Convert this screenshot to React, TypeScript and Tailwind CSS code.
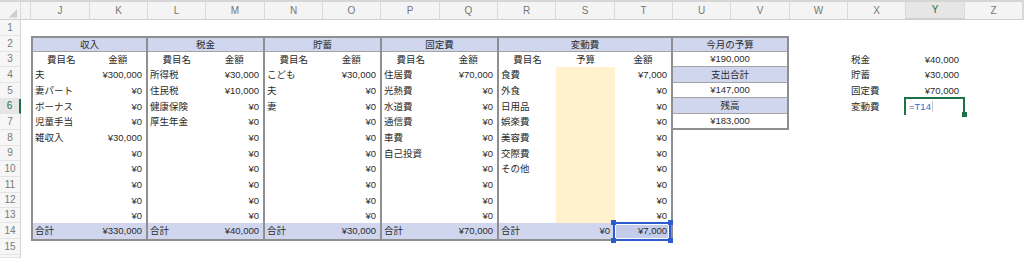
import React from 'react';

const BLUE = 'bg-[#cfd6ee]';

const letters = ['', '', 'J', 'K', 'L', 'M', 'N', 'O', 'P', 'Q', 'R', 'S', 'T', 'U', 'V', 'W', 'X', 'Y', 'Z', ''];
const rowNums = Array.from({ length: 16 }, (_, i) => i + 1);

// heights of rows 4..13 inside the tables
const dataH = [16, 16, 15, 16, 16, 15, 16, 16, 15, 15];
const hc = (h: number) => (h === 15 ? 'h-[15px]' : 'h-[16px]');

const fill = (rows: [string, string][]): [string, string][] => [
  ...rows,
  ...Array.from({ length: 10 - rows.length }, () => ['', '¥0'] as [string, string]),
];

type Group = { title: string; w: string; rows: [string, string][]; total: string };

const groups: Group[] = [
  {
    title: '収入',
    w: 'w-[115px]',
    rows: fill([
      ['夫', '¥300,000'],
      ['妻パート', '¥0'],
      ['ボーナス', '¥0'],
      ['児童手当', '¥0'],
      ['雑収入', '¥30,000'],
    ]),
    total: '¥330,000',
  },
  {
    title: '税金',
    w: 'w-[117px]',
    rows: fill([
      ['所得税', '¥30,000'],
      ['住民税', '¥10,000'],
      ['健康保険', '¥0'],
      ['厚生年金', '¥0'],
    ]),
    total: '¥40,000',
  },
  {
    title: '貯蓄',
    w: 'w-[117px]',
    rows: fill([
      ['こども', '¥30,000'],
      ['夫', '¥0'],
      ['妻', '¥0'],
    ]),
    total: '¥30,000',
  },
  {
    title: '固定費',
    w: 'w-[117px]',
    rows: fill([
      ['住居費', '¥70,000'],
      ['光熱費', '¥0'],
      ['水道費', '¥0'],
      ['通信費', '¥0'],
      ['車費', '¥0'],
      ['自己投資', '¥0'],
    ]),
    total: '¥70,000',
  },
];

const hensou = fill([
  ['食費', '¥7,000'],
  ['外食', '¥0'],
  ['日用品', '¥0'],
  ['娯楽費', '¥0'],
  ['美容費', '¥0'],
  ['交際費', '¥0'],
  ['その他', '¥0'],
]);

const budget = [
  { text: '今月の予算', head: true, h: 'h-[14px]' },
  { text: '¥190,000', head: false, h: 'h-[15px]' },
  { text: '支出合計', head: true, h: 'h-[16px]' },
  { text: '¥147,000', head: false, h: 'h-[15px]' },
  { text: '残高', head: true, h: 'h-[16px]' },
  { text: '¥183,000', head: false, h: 'h-[14px]' },
];

function GroupCol({ g }: { g: Group }) {
  return (
    <div className={`flex flex-col border-r-2 border-[#8f8f8f] ${g.w}`}>
      <div className={`flex h-[14px] items-center justify-center border-b border-[#a3a3a3] ${BLUE}`}>
        {g.title}
      </div>
      <div className="flex h-[15px]">
        <div className="flex flex-1 items-center justify-center">費目名</div>
        <div className="flex flex-1 items-center justify-center">金額</div>
      </div>
      {g.rows.map(([n, v], i) => (
        <div key={i} className={`flex ${hc(dataH[i])}`}>
          <div className="flex flex-1 items-center pl-[2px]">{n}</div>
          <div className="flex flex-1 items-center justify-end pr-[4px]">{v}</div>
        </div>
      ))}
      <div className={`flex h-[16px] ${BLUE}`}>
        <div className="flex flex-1 items-center pl-[2px]">合計</div>
        <div className="flex flex-1 items-center justify-end pr-[4px]">{g.total}</div>
      </div>
    </div>
  );
}

function HensouCol() {
  return (
    <div className="flex w-[172px] flex-col">
      <div className={`flex h-[14px] items-center justify-center border-b border-[#a3a3a3] ${BLUE}`}>
        変動費
      </div>
      <div className="flex h-[15px]">
        <div className="flex w-[57px] items-center justify-center">費目名</div>
        <div className="flex w-[59px] items-center justify-center">予算</div>
        <div className="flex flex-1 items-center justify-center">金額</div>
      </div>
      {hensou.map(([n, v], i) => (
        <div key={i} className={`flex ${hc(dataH[i])}`}>
          <div className="flex w-[57px] items-center pl-[2px]">{n}</div>
          <div className="w-[59px] bg-[#fff2cc]" />
          <div className="flex flex-1 items-center justify-end pr-[4px]">{v}</div>
        </div>
      ))}
      <div className={`flex h-[16px] ${BLUE}`}>
        <div className="flex w-[57px] items-center pl-[2px]">合計</div>
        <div className="flex w-[59px] items-center justify-end pr-[5px]">¥0</div>
        <div className="relative flex flex-1 items-center justify-end bg-[#c3cdeb] pr-[4px]">
          ¥7,000
          <div className="absolute -top-[1px] -left-[2px] right-0 -bottom-[2px] border-2 border-[#2d5bd0]">
            <div className="h-full w-full border border-white" />
          </div>
          <span className="absolute -top-[3px] -left-[4px] h-[5px] w-[5px] bg-[#2d5bd0]" />
          <span className="absolute -top-[3px] -right-[2px] h-[5px] w-[5px] bg-[#2d5bd0]" />
          <span className="absolute -bottom-[4px] -left-[4px] h-[5px] w-[5px] bg-[#2d5bd0]" />
          <span className="absolute -bottom-[4px] -right-[2px] h-[5px] w-[5px] bg-[#2d5bd0]" />
        </div>
      </div>
    </div>
  );
}

const sideList = [
  { label: '税金', value: '¥40,000', row: 'row-start-4' },
  { label: '貯蓄', value: '¥30,000', row: 'row-start-5' },
  { label: '固定費', value: '¥70,000', row: 'row-start-6' },
];

export default function App() {
  return (
    <div className="grid h-[258px] w-[1024px] grid-cols-[21px_10px_59px_58px_58px_59px_58px_58px_59px_58px_58px_59px_58px_58px_59px_58px_58px_59px_58px_1fr] grid-rows-[20px_16px_16px_15px_16px_16px_15px_16px_16px_15px_16px_16px_15px_15px_16px_16px_1fr] overflow-hidden bg-white font-['Liberation_Sans','Noto_Sans_CJK_JP',sans-serif] text-[9.5px] leading-none text-[#2b2b2b]">
      {/* column headers */}
      {letters.map((l, i) => (
        <div
          key={i}
          className={`row-start-1 flex items-center justify-center border-t-2 border-r border-b border-t-[#d6d6d6] border-r-[#d9d9d9] border-b-[#cfcfcf] text-[10px] ${
            l === 'Y' ? 'border-b-2 border-b-[#1e7145] bg-[#e6e6e6] text-[#1e7145]' : 'bg-[#f4f4f4] text-[#777]'
          }`}
        >
          {i === 0 ? (
            <svg width="21" height="18" viewBox="0 0 21 18" className="self-end">
              <polygon points="18,8 18,17 9,17" fill="#cfcfcf" />
            </svg>
          ) : (
            l
          )}
        </div>
      ))}

      {/* row numbers */}
      {rowNums.map((n) => (
        <div
          key={n}
          className={`col-start-1 flex items-center justify-center border-b border-[#e4e4e4] text-[10px] ${
            n === 6
              ? 'border-r-2 border-r-[#1e7145] bg-[#e6e6e6] text-[#1e7145]'
              : 'border-r border-r-[#d2d2d2] bg-[#f6f6f6] text-[#7a7a7a]'
          }`}
        >
          {n < 16 ? n : ''}
        </div>
      ))}

      {/* main tables J..T */}
      <div className="col-start-3 col-end-14 row-start-3 row-end-17 flex h-[205px] self-start border-2 border-[#8f8f8f]">
        {groups.map((g) => (
          <GroupCol key={g.title} g={g} />
        ))}
        <HensouCol />
      </div>

      {/* budget summary U..V */}
      <div className="col-start-14 col-end-16 row-start-3 row-end-9 flex h-[94px] w-[116px] flex-col self-start justify-self-start border-t-2 border-r-2 border-b-2 border-[#8f8f8f]">
        {budget.map((b, i) => (
          <div
            key={i}
            className={`flex items-center justify-center ${b.h} ${i < budget.length - 1 ? 'border-b border-[#a3a3a3]' : ''} ${
              b.head ? BLUE : ''
            }`}
          >
            {b.text}
          </div>
        ))}
      </div>

      {/* side list X..Y */}
      {sideList.map((s) => (
        <React.Fragment key={s.label}>
          <div className={`col-start-17 flex items-center pl-[3px] ${s.row}`}>{s.label}</div>
          <div className={`col-start-18 flex items-center justify-end pr-[6px] ${s.row}`}>{s.value}</div>
        </React.Fragment>
      ))}
      <div className="col-start-17 row-start-7 flex items-center pl-[3px]">変動費</div>
      <div className="relative col-start-18 row-start-7 flex items-center pl-[3px]">
        <span className="text-[#555]">=</span>
        <span className="text-[#3a67d6]">T14</span>
        <span className="ml-[1px] h-[11px] w-px bg-[#c8c8c8]" />
        <div className="absolute -top-[2px] -left-[2px] right-0 -bottom-[1px] border-t-2 border-r-2 border-l-2 border-[#1e7145]" />
        <span className="absolute -right-[2px] -bottom-[3px] h-[5px] w-[5px] bg-[#1e7145]" />
      </div>
    </div>
  );
}
